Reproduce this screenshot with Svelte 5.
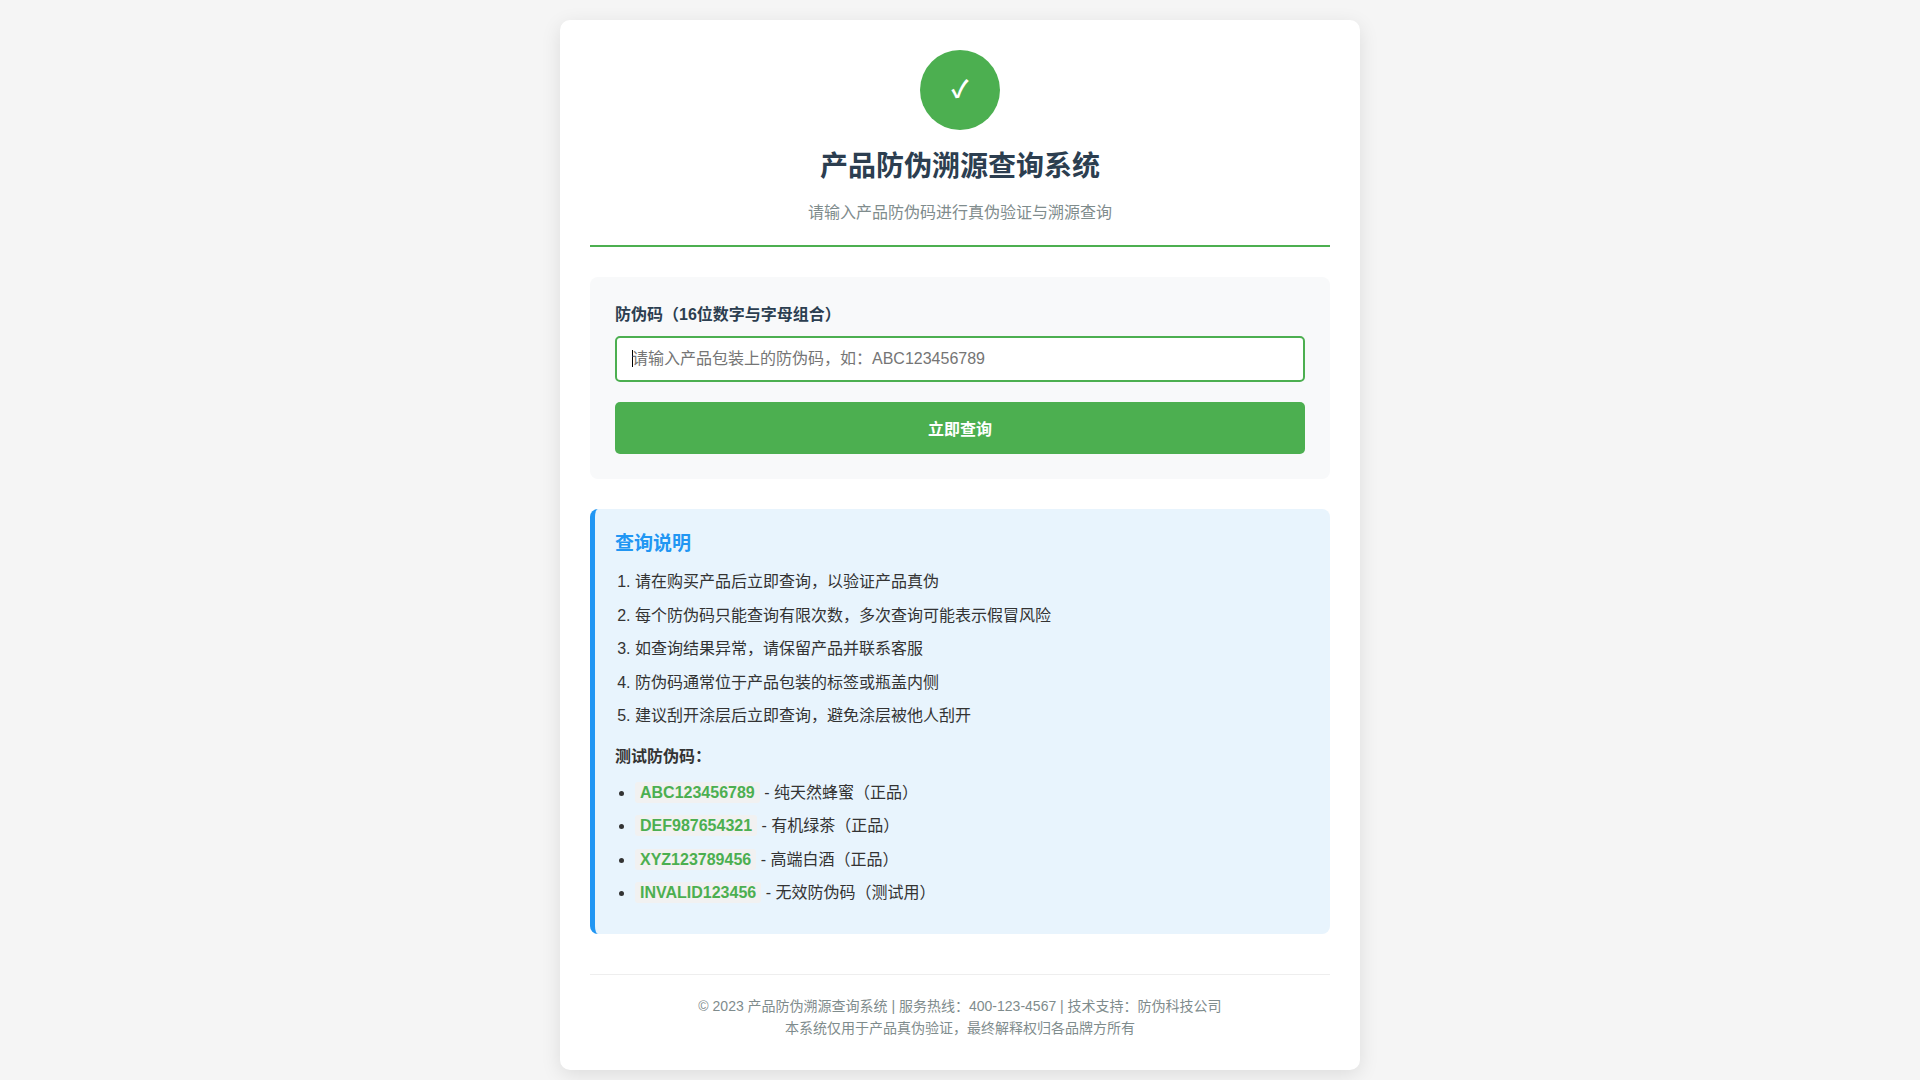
<script>
  import { onMount } from 'svelte';

  let code = '';
  let codeInput;

  const tips = [
    '请在购买产品后立即查询，以验证产品真伪',
    '每个防伪码只能查询有限次数，多次查询可能表示假冒风险',
    '如查询结果异常，请保留产品并联系客服',
    '防伪码通常位于产品包装的标签或瓶盖内侧',
    '建议刮开涂层后立即查询，避免涂层被他人刮开'
  ];

  const samples = [
    { code: 'ABC123456789', name: '纯天然蜂蜜（正品）' },
    { code: 'DEF987654321', name: '有机绿茶（正品）' },
    { code: 'XYZ123789456', name: '高端白酒（正品）' },
    { code: 'INVALID123456', name: '无效防伪码（测试用）' }
  ];

  onMount(() => {
    codeInput.focus();
  });

  function handleSubmit(event) {
    event.preventDefault();
    code = code.trim().toUpperCase();
  }
</script>

<div class="container">
  <header class="header">
    <div class="logo">✓</div>
    <h1>产品防伪溯源查询系统</h1>
    <p class="subtitle">请输入产品防伪码进行真伪验证与溯源查询</p>
  </header>

  <form class="query-form" on:submit={handleSubmit}>
    <div class="form-group">
      <label for="code">防伪码（16位数字与字母组合）</label>
      <input
        id="code"
        type="text"
        autocomplete="off"
        placeholder="请输入产品包装上的防伪码，如：ABC123456789"
        bind:value={code}
        bind:this={codeInput}
      />
    </div>
    <button type="submit" class="btn">立即查询</button>
  </form>

  <section class="info">
    <h3>查询说明</h3>
    <ol>
      {#each tips as tip}
        <li>{tip}</li>
      {/each}
    </ol>
    <p class="sample-title"><strong>测试防伪码：</strong></p>
    <ul>
      {#each samples as sample}
        <li><span class="code">{sample.code}</span> - {sample.name}</li>
      {/each}
    </ul>
  </section>

  <footer class="footer">
    <p>© 2023 产品防伪溯源查询系统 | 服务热线：400-123-4567 | 技术支持：防伪科技公司</p>
    <p>本系统仅用于产品真伪验证，最终解释权归各品牌方所有</p>
  </footer>
</div>

<style>
  :global(*) {
    margin: 0;
    padding: 0;
    box-sizing: border-box;
  }

  :global(body) {
    padding: 20px;
    background-color: #f5f5f5;
    color: #333;
    font-family: 'Liberation Sans', 'Noto Sans CJK SC', sans-serif;
    font-size: 16px;
    line-height: 1.6;
  }

  .container {
    max-width: 800px;
    margin: 0 auto;
    padding: 30px;
    background-color: #fff;
    border-radius: 10px;
    box-shadow: 0 5px 20px rgba(0, 0, 0, 0.1);
  }

  .header {
    margin-bottom: 30px;
    padding-bottom: 20px;
    border-bottom: 2px solid #4caf50;
    text-align: center;
  }

  .logo {
    display: flex;
    align-items: center;
    justify-content: center;
    width: 80px;
    height: 80px;
    margin: 0 auto 15px;
    border-radius: 50%;
    background-color: #4caf50;
    color: #fff;
    font-size: 24px;
    font-weight: bold;
  }

  h1 {
    margin-bottom: 10px;
    color: #2c3e50;
    font-size: 28px;
  }

  .subtitle {
    color: #7f8c8d;
  }

  .query-form {
    margin-bottom: 30px;
    padding: 25px;
    border-radius: 8px;
    background-color: #f8f9fa;
  }

  .form-group {
    margin-bottom: 20px;
  }

  label {
    display: block;
    margin-bottom: 8px;
    color: #2c3e50;
    font-weight: 600;
  }

  input {
    display: block;
    width: 100%;
    padding: 12px 15px;
    border: 2px solid #ddd;
    border-radius: 5px;
    background-color: #fff;
    font-family: inherit;
    font-size: 16px;
  }

  input:focus {
    border-color: #4caf50;
    outline: none;
  }

  /* steady caret while the field is still empty */
  input:focus:placeholder-shown {
    background-image: linear-gradient(#000, #000);
    background-position: 15px 12px;
    background-repeat: no-repeat;
    background-size: 1px 17px;
    caret-color: transparent;
  }

  .btn {
    display: block;
    width: 100%;
    padding: 14px;
    border: none;
    border-radius: 5px;
    background-color: #4caf50;
    color: #fff;
    font-family: inherit;
    font-size: 16px;
    font-weight: 600;
    cursor: pointer;
  }

  .btn:hover {
    background-color: #45a049;
  }

  .info {
    padding: 20px;
    border-left: 5px solid #2196f3;
    border-radius: 8px;
    background-color: #e8f4fd;
  }

  h3 {
    margin-bottom: 10px;
    color: #2196f3;
    font-size: 19px;
    line-height: 30px;
  }

  ol,
  ul {
    padding-left: 20px;
  }

  li {
    margin-bottom: 8px;
  }

  .sample-title {
    margin: 15px 0 10px;
  }

  .code {
    padding: 2px 5px;
    border-radius: 3px;
    background-color: #f1f1f1;
    color: #4caf50;
    font-weight: bold;
  }

  .footer {
    margin-top: 40px;
    padding-top: 20px;
    border-top: 1px solid #eee;
    color: #7f8c8d;
    font-size: 14px;
    text-align: center;
  }
</style>
